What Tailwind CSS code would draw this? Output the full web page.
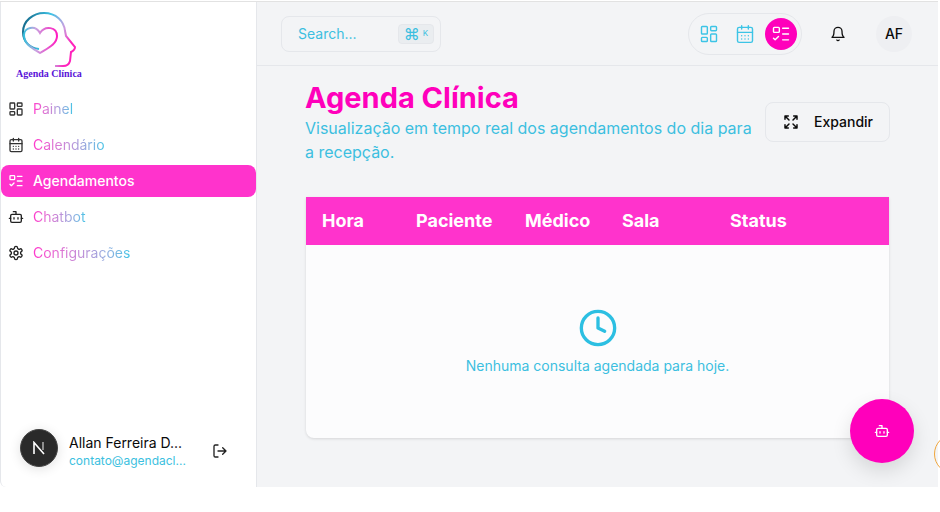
<!DOCTYPE html>
<html lang="pt">
<head>
<meta charset="utf-8">
<script src="https://cdn.jsdelivr.net/npm/@tailwindcss/browser@4"></script>
<title>Agenda Clínica</title>
</head>
<body class="bg-white font-['Inter',sans-serif] w-[940px] h-[512px] overflow-hidden relative">
<div class="flex h-[486px] w-[938px] border-t border-t-[#e2e2e2] rounded-bl-md mt-px">
  <aside class="w-[257px] shrink-0 flex flex-col bg-white border-x border-[#e5e7eb] rounded-bl-md">
    <div class="h-[91px] pl-[14px] pt-[9px] shrink-0">
      <div class="relative w-[70px] h-[72px]">
        <svg width="70" height="58" viewBox="0 0 70 58" fill="none" class="absolute left-0 top-0">
          <defs>
            <linearGradient id="h1" x1="0" y1="0" x2="1" y2="0.3"><stop offset="0" stop-color="#0f5f80"/><stop offset="0.5" stop-color="#3dc3e6"/><stop offset="0.8" stop-color="#c9a0e0"/><stop offset="1" stop-color="#ff22bb"/></linearGradient>
            <linearGradient id="h2" x1="0" y1="0" x2="1" y2="0"><stop offset="0" stop-color="#35c0dd"/><stop offset="0.35" stop-color="#c8a5e0"/><stop offset="1" stop-color="#ff1cc0"/></linearGradient>
          </defs>
          <path d="M24 38 C15 37 8 31 8 21 C8 10 18 2 29 2 C41 2 49 10 50 20 L51 25 L60 36 C60 39 58 40 56 41 L55 50 C54 54 52 55 48 55 L40 55" stroke="url(#h1)" stroke-width="2"/>
          <path d="M25 42 C17 37 9 33 9 24 C9 17 20 13 25 22 C30 14 42 16 42 25 C42 33 33 37 25 42 Z" stroke="url(#h2)" stroke-width="2"/>
        </svg>
        <span class="absolute left-[1px] top-[57px] text-[10px] leading-[11px] font-bold text-[#5a14d8] font-['Liberation_Serif',serif] whitespace-nowrap">Agenda Clínica</span>
      </div>
    </div>
    <nav class="flex flex-col gap-1 text-sm">
      <a class="flex items-center gap-2 h-8 pl-[7px]">
        <svg class="text-[#333]" width="16" height="16" viewBox="0 0 24 24" fill="none" stroke="currentColor" stroke-width="2" stroke-linecap="round" stroke-linejoin="round"><rect x="3" y="3" width="7" height="9" rx="1"/><rect x="14" y="3" width="7" height="5" rx="1"/><rect x="14" y="12" width="7" height="9" rx="1"/><rect x="3" y="16" width="7" height="5" rx="1"/></svg>
        <span class="ml-px bg-linear-to-r from-[#ff33cc] to-[#3cc4e6] bg-clip-text text-transparent">Painel</span>
      </a>
      <a class="flex items-center gap-2 h-8 pl-[7px]">
        <svg class="text-[#333]" width="16" height="16" viewBox="0 0 24 24" fill="none" stroke="currentColor" stroke-width="2" stroke-linecap="round" stroke-linejoin="round"><rect x="3" y="4" width="18" height="18" rx="2"/><path d="M8 2v4M16 2v4M3 10h18"/><path d="M8 14h.01M12 14h.01M16 14h.01M8 18h.01M12 18h.01M16 18h.01"/></svg>
        <span class="ml-px bg-linear-to-r from-[#ff33cc] to-[#3cc4e6] bg-clip-text text-transparent">Calendário</span>
      </a>
      <a class="flex items-center gap-2 h-8 pl-[7px] rounded-lg bg-[#ff33cc] text-white font-medium">
        <svg width="16" height="16" viewBox="0 0 24 24" fill="none" stroke="currentColor" stroke-width="2" stroke-linecap="round" stroke-linejoin="round"><rect x="3" y="4" width="7" height="6" rx="1"/><path d="M3 17l2 2 4-4M14 5h7M14 12h7M14 19h7"/></svg>
        <span class="ml-px">Agendamentos</span>
      </a>
      <a class="flex items-center gap-2 h-8 pl-[7px]">
        <svg class="text-[#222]" width="16" height="16" viewBox="0 0 24 24" fill="none" stroke="currentColor" stroke-width="2" stroke-linecap="round" stroke-linejoin="round"><path d="M12 8V4H8"/><rect x="4" y="8" width="16" height="12" rx="2"/><path d="M2 14h2M20 14h2M15 13v2M9 13v2"/></svg>
        <span class="ml-px bg-linear-to-r from-[#ff33cc] to-[#3cc4e6] bg-clip-text text-transparent">Chatbot</span>
      </a>
      <a class="flex items-center gap-2 h-8 pl-[7px]">
        <svg class="text-[#222]" width="16" height="16" viewBox="0 0 24 24" fill="none" stroke="currentColor" stroke-width="2" stroke-linecap="round" stroke-linejoin="round"><path d="M12.22 2h-.44a2 2 0 0 0-2 2v.18a2 2 0 0 1-1 1.73l-.43.25a2 2 0 0 1-2 0l-.15-.08a2 2 0 0 0-2.73.73l-.22.38a2 2 0 0 0 .73 2.73l.15.1a2 2 0 0 1 1 1.72v.51a2 2 0 0 1-1 1.74l-.15.09a2 2 0 0 0-.73 2.73l.22.38a2 2 0 0 0 2.73.73l.15-.08a2 2 0 0 1 2 0l.43.25a2 2 0 0 1 1 1.73V20a2 2 0 0 0 2 2h.44a2 2 0 0 0 2-2v-.18a2 2 0 0 1 1-1.73l.43-.25a2 2 0 0 1 2 0l.15.08a2 2 0 0 0 2.73-.73l.22-.39a2 2 0 0 0-.73-2.73l-.15-.08a2 2 0 0 1-1-1.74v-.5a2 2 0 0 1 1-1.74l.15-.09a2 2 0 0 0 .73-2.73l-.22-.38a2 2 0 0 0-2.73-.73l-.15.08a2 2 0 0 1-2 0l-.43-.25a2 2 0 0 1-1-1.73V4a2 2 0 0 0-2-2z"/><circle cx="12" cy="12" r="3"/></svg>
        <span class="ml-px bg-linear-to-r from-[#ff33cc] to-[#3cc4e6] bg-clip-text text-transparent">Configurações</span>
      </a>
    </nav>
    <div class="mt-auto h-[76px] flex items-center pl-[19px] pb-[3px]">
      <div class="w-[38px] h-[38px] rounded-full bg-[#2a2a2a] border border-[#444] shadow-[0_2px_12px_rgba(0,0,0,0.12)] flex items-center justify-center shrink-0">
        <svg width="14" height="14" viewBox="0 0 14 14" fill="none"><path d="M2 13V1.5L12 13" stroke="#fff" stroke-width="1.6"/><path d="M11 1v8" stroke="#bbb" stroke-width="1.4"/></svg>
      </div>
      <div class="ml-[11px] w-[118px] pt-[6px] whitespace-nowrap">
        <div class="text-sm leading-5 text-[#0a0a0a]">Allan Ferreira D...</div>
        <div class="text-xs leading-4 text-[#3cbfe0]">contato@agendacl...</div>
      </div>
      <svg class="ml-[25px] mt-[6px] text-[#222]" width="16" height="16" viewBox="0 0 24 24" fill="none" stroke="currentColor" stroke-width="2" stroke-linecap="round" stroke-linejoin="round"><path d="M9 21H5a2 2 0 0 1-2-2V5a2 2 0 0 1 2-2h4"/><path d="M16 17l5-5-5-5M21 12H9"/></svg>
    </div>
  </aside>
  <main class="flex-1 min-w-0 bg-[#f3f4f6] flex flex-col">
    <header class="h-[64px] shrink-0 flex items-center border-b border-[#e5e7eb] pl-[24px] pr-[26px]">
      <div class="w-[160px] h-[36px] rounded-lg border border-[#e5e7eb] flex items-center justify-between pl-4 pr-[6px] text-sm text-[#3cbfe0]">
        <span>Search...</span>
        <span class="h-5 w-9 rounded bg-[#eaedf0] border border-[#e5e7eb] flex items-center justify-center gap-[3px]"><span class="text-base leading-none">⌘</span><span class="text-[8px]">K</span></span>
      </div>
      <div class="ml-auto flex items-center">
        <div class="h-[42px] w-[114px] rounded-full border border-[#e5e7eb] flex items-center pl-[4px] pr-[4px] justify-between">
          <span class="w-8 h-8 flex items-center justify-center text-[#3cc4e6]"><svg width="20" height="20" viewBox="0 0 24 24" fill="none" stroke="currentColor" stroke-width="1.7" stroke-linecap="round" stroke-linejoin="round"><rect x="3" y="3" width="7" height="9" rx="1"/><rect x="14" y="3" width="7" height="5" rx="1"/><rect x="14" y="12" width="7" height="9" rx="1"/><rect x="3" y="16" width="7" height="5" rx="1"/></svg></span>
          <span class="w-8 h-8 flex items-center justify-center text-[#3cc4e6]"><svg width="20" height="20" viewBox="0 0 24 24" fill="none" stroke="currentColor" stroke-width="1.7" stroke-linecap="round" stroke-linejoin="round"><rect x="3" y="4" width="18" height="18" rx="2"/><path d="M8 2v4M16 2v4M3 10h18"/><path d="M8 14h.01M12 14h.01M16 14h.01M8 18h.01M12 18h.01M16 18h.01"/></svg></span>
          <span class="w-8 h-8 rounded-full bg-[#ff00bb] flex items-center justify-center text-white"><svg width="20" height="20" viewBox="0 0 24 24" fill="none" stroke="currentColor" stroke-width="1.7" stroke-linecap="round" stroke-linejoin="round"><rect x="3" y="4" width="7" height="6" rx="1"/><path d="M3 17l2 2 4-4M14 5h7M14 12h7M14 19h7"/></svg></span>
        </div>
        <svg class="ml-[28px] text-[#111]" width="16" height="16" viewBox="0 0 24 24" fill="none" stroke="currentColor" stroke-width="2" stroke-linecap="round" stroke-linejoin="round"><path d="M6 8a6 6 0 0 1 12 0c0 7 3 9 3 9H3s3-2 3-9"/><path d="M10.3 21a1.94 1.94 0 0 0 3.4 0"/></svg>
        <span class="ml-[30px] w-9 h-9 rounded-full bg-[#eeeff2] flex items-center justify-center text-sm font-medium text-[#0a0a0a]">AF</span>
      </div>
    </header>
    <div class="relative flex-1 min-h-0 pl-[48px] pr-[48px]">
      <div class="flex items-start justify-between pt-[14px]">
        <div class="w-[452px]">
          <h1 class="text-[29px] leading-[36px] font-bold text-[#ff00bb]">Agenda Clínica</h1>
          <p class="text-base leading-6 text-[#3cbfe0]">Visualização em tempo real dos agendamentos do dia para a recepção.</p>
        </div>
        <button class="mt-[22px] w-[125px] h-10 rounded-lg border border-[#e5e7eb] flex items-center text-sm font-medium text-[#0a0a0a] pl-[17px]">
          <svg width="16" height="16" viewBox="0 0 24 24" fill="none" stroke="currentColor" stroke-width="2.2" stroke-linecap="round" stroke-linejoin="round"><path d="M21 3l-6 6M21 3v5M21 3h-5M3 3l6 6M3 3v5M3 3h5M21 21l-6-6M21 21v-5M21 21h-5M3 21l6-6M3 21v-5M3 21h5"/></svg>
          <span class="ml-[15px]">Expandir</span>
        </button>
      </div>
      <div class="mt-[33px] mx-px h-[241px] rounded-b-lg bg-[#fcfcfd] shadow-[0_1px_3px_rgba(0,0,0,0.12)] overflow-hidden">
        <div class="h-[48px] bg-[#ff33cc] flex items-center text-white font-bold text-[18px] pl-4 pb-[2px]">
          <span class="w-[94px]">Hora</span>
          <span class="w-[109px]">Paciente</span>
          <span class="w-[97px]">Médico</span>
          <span class="w-[108px]">Sala</span>
          <span>Status</span>
        </div>
        <div class="flex flex-col items-center pt-[63px]">
          <svg class="text-[#2cbfe2]" width="40" height="40" viewBox="0 0 24 24" fill="none" stroke="currentColor" stroke-width="2" stroke-linecap="round" stroke-linejoin="round"><circle cx="12" cy="12" r="10"/><path d="M12 6v6l4 2"/></svg>
          <p class="mt-[8px] text-sm text-[#3cbfe0]">Nenhuma consulta agendada para hoje.</p>
        </div>
      </div>
      <div class="absolute left-[593px] top-[333px] w-16 h-16 rounded-full bg-[#ff00bb] shadow-[0_8px_20px_rgba(0,0,0,0.12)] flex items-center justify-center text-white">
        <svg width="16" height="16" viewBox="0 0 24 24" fill="none" stroke="currentColor" stroke-width="2" stroke-linecap="round" stroke-linejoin="round"><path d="M12 8V4H8"/><rect x="4" y="8" width="16" height="12" rx="2"/><path d="M2 14h2M20 14h2M15 13v2M9 13v2"/></svg>
      </div>
      <div class="absolute left-[677px] top-[368px] w-10 h-10 rounded-full border border-[#f0a63c]"></div>
    </div>
  </main>
</div>
</body>
</html>
